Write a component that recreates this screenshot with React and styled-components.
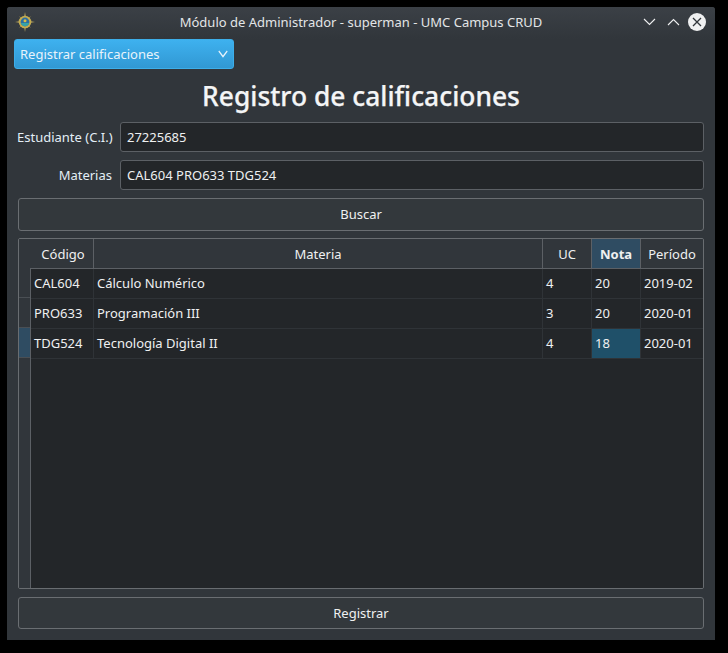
import React from "react";
import styled, { createGlobalStyle } from "styled-components";

const GlobalStyle = createGlobalStyle`
  html, body {
    margin: 0;
    height: 100%;
    background: #000;
  }
  * {
    box-sizing: border-box;
  }
`;

const Screen = styled.div`
  width: 728px;
  height: 653px;
  padding: 7px 13px 13px 7px;
  font-family: "Noto Sans", sans-serif;
  font-size: 13px;
  color: #eff0f1;
`;

const Window = styled.div`
  width: 708px;
  height: 633px;
  display: flex;
  flex-direction: column;
  background: #31363b;
  border-radius: 3px 3px 0 0;
`;

const TitleBar = styled.div`
  height: 32px;
  flex: none;
  display: flex;
  align-items: center;
  padding: 0 9px 2px 8px;
  background: linear-gradient(#3b4046, #31363b);
  border-radius: 3px 3px 0 0;
`;

const TitleText = styled.div`
  flex: 1;
  text-align: center;
  padding-left: 44px;
  color: #e3e5e7;
  line-height: 26px;
  height: 27px;
`;

const TitleButtons = styled.div`
  display: flex;
  align-items: center;
  gap: 11px;
`;

const CloseWrap = styled.div`
  display: flex;
  margin-left: -3px;
`;

const Body = styled.div`
  flex: 1;
  display: flex;
  flex-direction: column;
  padding: 0 11px 11px;
`;

const Combo = styled.div`
  width: 220px;
  height: 30px;
  margin-left: -4px;
  padding: 0 5px 0 5px;
  display: flex;
  align-items: center;
  justify-content: space-between;
  color: #e8f3fb;
  border: 1px solid #3daee9;
  border-radius: 3px;
  background: linear-gradient(#3eb1ef, #3198d3);
`;

const Heading = styled.h1`
  margin: 8px 0 0;
  height: 45px;
  line-height: 39px;
  text-align: center;
  font-size: 26.4px;
  font-weight: 500;
  -webkit-text-stroke: 0.25px #f4f5f6;
  color: #f4f5f6;
`;

const FieldRow = styled.div`
  height: 30px;
  margin-bottom: 8px;
  margin-left: -1px;
  display: flex;
  align-items: center;
  gap: 8px;
`;

const FieldLabel = styled.label`
  width: 95px;
  text-align: right;
  white-space: nowrap;
  color: #e3eef6;
`;

const FieldInput = styled.div`
  flex: 1;
  height: 30px;
  padding: 0 6px;
  line-height: 28px;
  background: #232629;
  border: 1px solid #5c6065;
  border-radius: 3px;
`;

const PushButton = styled.div`
  height: ${(p) => p.$height}px;
  flex: none;
  display: flex;
  align-items: center;
  justify-content: center;
  padding-bottom: ${(p) => p.$lift}px;
  background: #33383c;
  border: 1px solid #6a6e72;
  border-radius: 3px;
`;

const TableFrame = styled.div`
  margin: 7px 0 8px;
  height: 351px;
  flex: none;
  display: grid;
  grid-template-columns: 12px 1fr;
  grid-template-rows: 30px 1fr;
  border: 1px solid #696d71;
  border-radius: 2px;
  overflow: hidden;
`;

const Corner = styled.div`
  background: #31363b;
`;

const HeaderRow = styled.div`
  display: grid;
  grid-template-columns: 63px 449px 49px 49px 62px;
  border-bottom: 1px solid #5c6065;
  background: #31363b;
`;

const HeaderCell = styled.div`
  display: flex;
  align-items: center;
  justify-content: center;
  padding-left: ${(p) => (p.$pad ? 2 : 0)}px;
  border-right: 1px solid #5c6065;
  font-weight: ${(p) => (p.$active ? 700 : 400)};
  background: ${(p) => (p.$active ? "#2f4c62" : "transparent")};
  &:last-child {
    border-right: none;
  }
`;

const RowHeader = styled.div`
  display: flex;
  flex-direction: column;
  background: #31363b;
  border-right: 1px solid #5c6065;
  margin-top: -1px;
`;

const RowMark = styled.div`
  height: 30px;
  flex: none;
  border-bottom: 1px solid #4a4f54;
  background: ${(p) => (p.$active ? "#2f4c62" : "transparent")};
`;

const Rows = styled.div`
  background: #232629;
`;

const Row = styled.div`
  height: 30px;
  display: grid;
  grid-template-columns: 63px 449px 49px 49px 62px;
  border-bottom: 1px solid #2f3337;
`;

const Cell = styled.div`
  padding-left: 3px;
  line-height: 29px;
  white-space: nowrap;
  border-right: 1px solid #2f3337;
  background: ${(p) => (p.$selected ? "#1f5069" : "transparent")};
  &:last-child {
    border-right: none;
  }
`;

const columns = ["Código", "Materia", "UC", "Nota", "Período"];

const rows = [
  ["CAL604", "Cálculo Numérico", "4", "20", "2019-02"],
  ["PRO633", "Programación III", "3", "20", "2020-01"],
  ["TDG524", "Tecnología Digital II", "4", "18", "2020-01"],
];

const Emblem = () => (
  <svg width="20" height="20" viewBox="0 0 20 20">
    <path d="M10 0 L11 5 L10 10 L9 5 Z M10 20 L11 15 L10 10 L9 15 Z M0 10 L5 9 L10 10 L5 11 Z M20 10 L15 9 L10 10 L15 11 Z" fill="#a8985c" />
    <path d="M3.8 3.8 L8 7 L10 10 L7 8 Z M16.2 3.8 L12 7 L10 10 L13 8 Z M3.8 16.2 L8 13 L10 10 L7 12 Z M16.2 16.2 L12 13 L10 10 L13 12 Z" fill="#7f7650" />
    <circle cx="10" cy="10" r="6.3" fill="#c4ab4e" />
    <circle cx="10" cy="10" r="4.4" fill="#2c6ea3" />
    <path d="M5.8 11 H14.2 A4.4 4.4 0 0 1 5.8 11 Z" fill="#35a4a8" />
    <circle cx="10" cy="8.8" r="1.5" fill="#d9bb45" />
  </svg>
);

const Chevron = ({ up, color = "#eff0f1", size = 13, weight = 1.1 }) => (
  <svg width={size} height="8" viewBox="0 0 13 8" fill="none" preserveAspectRatio="none">
    <path d={up ? "M1 7 L6.5 1.5 L12 7" : "M1 1 L6.5 6.5 L12 1"} stroke={color} strokeWidth={weight} />
  </svg>
);

const CloseIcon = () => (
  <svg width="18" height="18" viewBox="0 0 18 18" fill="none">
    <circle cx="9" cy="9" r="9" fill="#eff0f1" />
    <path d="M5 5 L13 13 M13 5 L5 13" stroke="#31363b" strokeWidth="1.3" />
  </svg>
);

export default function App() {
  return (
    <Screen>
      <GlobalStyle />
      <Window>
        <TitleBar>
          <Emblem />
          <TitleText>Módulo de Administrador - superman - UMC Campus CRUD</TitleText>
          <TitleButtons>
            <Chevron />
            <Chevron up />
            <CloseWrap>
              <CloseIcon />
            </CloseWrap>
          </TitleButtons>
        </TitleBar>
        <Body>
          <Combo>
            Registrar calificaciones
            <Chevron color="#e8f3fb" size={10} weight={1.6} />
          </Combo>
          <Heading>Registro de calificaciones</Heading>
          <FieldRow>
            <FieldLabel>Estudiante (C.I.)</FieldLabel>
            <FieldInput>27225685</FieldInput>
          </FieldRow>
          <FieldRow>
            <FieldLabel>Materias</FieldLabel>
            <FieldInput>CAL604 PRO633 TDG524</FieldInput>
          </FieldRow>
          <PushButton $height={33} $lift={2}>Buscar</PushButton>
          <TableFrame>
            <Corner />
            <HeaderRow>
              {columns.map((c, i) => (
                <HeaderCell key={c} $active={c === "Nota"} $pad={i === 0}>
                  {c}
                </HeaderCell>
              ))}
            </HeaderRow>
            <RowHeader>
              <RowMark />
              <RowMark />
              <RowMark $active />
            </RowHeader>
            <Rows>
              {rows.map((r, ri) => (
                <Row key={r[0]}>
                  {r.map((v, ci) => (
                    <Cell key={ci} $selected={ri === 2 && ci === 3}>
                      {v}
                    </Cell>
                  ))}
                </Row>
              ))}
            </Rows>
          </TableFrame>
          <PushButton $height={32} $lift={0}>Registrar</PushButton>
        </Body>
      </Window>
    </Screen>
  );
}
